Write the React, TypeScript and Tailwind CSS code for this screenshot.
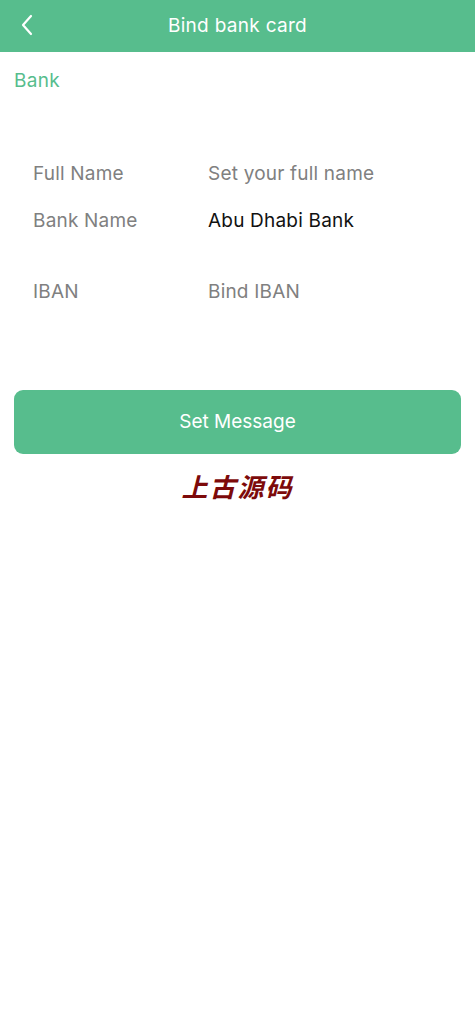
import React from "react";

const rows = [
  { label: "Full Name", value: "Set your full name", filled: false },
  { label: "Bank Name", value: "Abu Dhabi Bank", filled: true },
];

function BackIcon() {
  return (
    <svg width="14" height="22" viewBox="0 0 14 22" fill="none">
      <path
        d="M11 2 L3 11 L11 20"
        stroke="white"
        strokeWidth="2.2"
        strokeLinecap="round"
        strokeLinejoin="round"
      />
    </svg>
  );
}

export default function App() {
  return (
    <div
      className="min-h-[1024px] w-full bg-white"
      style={{ fontFamily: 'Inter, "Noto Sans CJK SC", sans-serif' }}
    >
      <header className="relative flex h-[52px] items-center justify-center bg-[#57bd8d]">
        <button className="absolute left-[20px] top-[14px]">
          <BackIcon />
        </button>
        <h1 className="text-[19px] tracking-[0.3px] text-white">Bind bank card</h1>
      </header>

      <div className="px-[14px] pt-[17px] text-[19px] leading-[24px] tracking-[0.3px] text-[#57bd8d]">
        Bank
      </div>

      <div className="mt-[58px] flex flex-col px-[33px]">
        {rows.map((row) => (
          <div
            key={row.label}
            className="flex h-[47px] items-center text-[19px] tracking-[0.2px]"
          >
            <span className="w-[175px] text-[#808080]">{row.label}</span>
            <span className={row.filled ? "text-[#111]" : "text-[#808080]"}>
              {row.value}
            </span>
          </div>
        ))}
        <div className="mt-[24px] flex h-[47px] items-center text-[19px] tracking-[0.2px]">
          <span className="w-[175px] text-[#808080]">IBAN</span>
          <span className="text-[#808080]">Bind IBAN</span>
        </div>
      </div>

      <div className="mt-[74px] px-[14px]">
        <button className="flex h-[64px] w-full items-center justify-center rounded-[9px] bg-[#57bd8d] text-[19px] text-white">
          Set Message
        </button>
      </div>

      <div className="mt-[17px] flex justify-center">
        <span className="text-[26px] font-semibold italic leading-[34px] tracking-[2px] text-[#7d0a0a]">
          上古源码
        </span>
      </div>
    </div>
  );
}
